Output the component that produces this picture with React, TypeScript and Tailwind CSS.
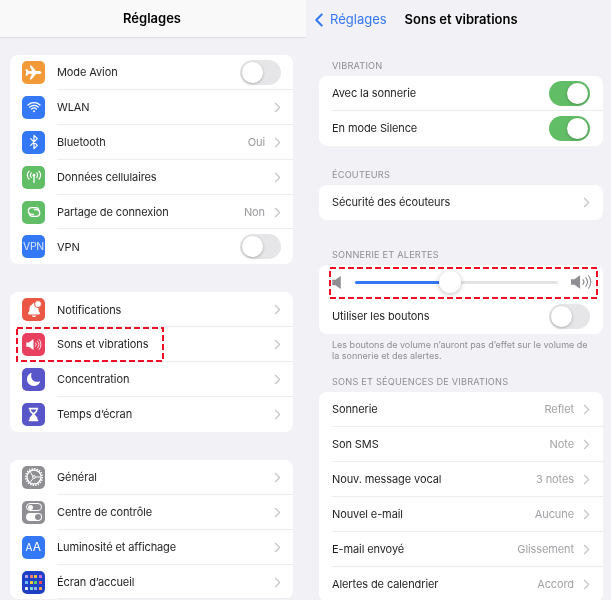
import { ChevronLeft, ChevronRight, Bluetooth } from 'lucide-react'
import { IoAirplane, IoWifi, IoMoon, IoNotifications } from 'react-icons/io5'

const font = { fontFamily: 'Inter, "Liberation Sans", sans-serif' }

const Toggle = ({ on = false }: { on?: boolean }) => (
  <div
    className={`flex h-[25px] w-[41px] items-center rounded-full p-[2px] ${
      on ? 'justify-end bg-[#62bd67]' : 'justify-start bg-[#e6e6e8]'
    }`}
  >
    <div className="h-[21px] w-[21px] rounded-full bg-white shadow-[0_1px_3px_rgba(0,0,0,0.25)]" />
  </div>
)

const Chevron = () => <ChevronRight size={17} strokeWidth={1.600} className="-mr-[5px] text-[#c4c4c8]" />

const Speaker = ({ className, waves = 0 }: { className?: string; waves?: number }) => (
  <svg viewBox="0 0 22 14" className={className} fill="none">
    <path d="M0 4.500h3L8 1v12L3 9.500H0z" fill="currentColor" />
    {waves > 0 && <path d="M10.500 5a3 3 0 0 1 0 4" stroke="currentColor" strokeWidth="1" strokeLinecap="round" />}
    {waves > 1 && <path d="M13 3.200a6 6 0 0 1 0 7.600" stroke="currentColor" strokeWidth="1" strokeLinecap="round" />}
    {waves > 2 && <path d="M15.500 1.500a9 9 0 0 1 0 11" stroke="currentColor" strokeWidth="1" strokeLinecap="round" />}
  </svg>
)

const Icon = ({ bg, children }: { bg: string; children: React.ReactNode }) => (
  <div className={`relative flex h-[23px] w-[23px] shrink-0 items-center justify-center rounded-[5px] text-white ${bg}`}>
    {children}
  </div>
)

const Antenna = () => (
  <svg viewBox="0 0 20 20" className="h-[18px] w-[18px]" fill="none" stroke="white" strokeWidth="1.300" strokeLinecap="round">
    <circle cx="10" cy="8" r="1.500" fill="white" stroke="none" />
    <path d="M10 9v7" strokeWidth="1.500" />
    <path d="M7 5.500a4 4 0 0 0 0 5M13 5.500a4 4 0 0 1 0 5M4.500 3.500a7 7 0 0 0 0 9M15.500 3.500a7 7 0 0 1 0 9" />
  </svg>
)

const Hotspot = () => (
  <svg viewBox="0 0 20 20" className="h-[18px] w-[18px]" fill="none" stroke="white" strokeWidth="1.500" strokeLinecap="round">
    <path d="M9.500 12.800H7.500a3.800 3.800 0 0 1 0-7.600h4.500a3.200 3.200 0 0 1 3.200 3.200" />
    <path d="M10.500 7.200h2a3.800 3.800 0 0 1 0 7.600H8a3.200 3.200 0 0 1-3.200-3.200" />
  </svg>
)

const SoundIcon = () => (
  <svg viewBox="0 0 20 20" className="h-[17px] w-[17px]" fill="none" stroke="white" strokeLinecap="round">
    <path d="M1.500 7.500h3L10 3.500v13l-5.500-4h-3z" fill="white" stroke="none" />
    <path d="M12.500 8a3 3 0 0 1 0 4M14.700 6a6 6 0 0 1 0 8M16.800 4.200a9 9 0 0 1 0 11.600" strokeWidth="1" />
  </svg>
)

const Hourglass = () => (
  <svg viewBox="0 0 20 20" className="h-[17px] w-[17px]" fill="white">
    <path d="M4.500 2h11v2h-1v2.500L11.200 10l3.300 3.500V16h1v2h-11v-2h1v-2.500L8.800 10 5.500 6.500V4h-1z" />
    <path d="M7.200 4h5.600v1.500L10 8.300 7.200 5.500z" fill="#5856c8" />
  </svg>
)

const Gear = () => (
  <svg viewBox="0 0 20 20" className="h-[20px] w-[20px]" fill="none" stroke="white">
    <circle cx="10" cy="10" r="7" strokeWidth="1.300" />
    <circle cx="10" cy="10" r="8.300" strokeWidth="1.600" strokeDasharray="1.300 1.300" />
    <circle cx="10" cy="10" r="1.400" strokeWidth="1" />
    <path d="M8.800 9.300 6.500 5.200M11.400 10H16M9.300 11.200 6.500 14.800" strokeWidth="1" />
  </svg>
)

const ControlCenter = () => (
  <div className="flex flex-col gap-[2px]">
    <div className="flex h-[8px] w-[16px] items-center justify-start rounded-full border border-white px-[1px]">
      <div className="h-[5px] w-[5px] rounded-full bg-white" />
    </div>
    <div className="flex h-[8px] w-[16px] items-center justify-end rounded-full bg-white px-[1px]">
      <div className="h-[6px] w-[6px] rounded-full bg-[#8e8e93]" />
    </div>
  </div>
)

const homeDots = [
  'bg-[#b9a3f0]', 'bg-[#f07a7a]', 'bg-[#f0c040]', 'bg-[#d070e0]',
  'bg-[#6fc0f5]', 'bg-[#f5c842]', 'bg-[#5ad06a]', 'bg-[#f05050]',
  'bg-[#e8e8f0]', 'bg-[#7fe0d0]', 'bg-[#8fb8f0]', 'bg-[#f0a050]',
]

const HomeScreen = () => (
  <div className="grid grid-cols-4 gap-x-[1.500px] gap-y-[3px]">
    {homeDots.map((c, i) => (
      <div key={i} className={`h-[3px] w-[3px] rounded-[0.500px] ${c}`} />
    ))}
  </div>
)

type RowProps = {
  icon?: React.ReactNode
  label: string
  value?: string
  toggle?: 'on' | 'off'
  last?: boolean
}

const LeftRow = ({ icon, label, value, toggle, last }: RowProps) => (
  <div className="flex h-[34.900px] items-center gap-[12px] pl-[12px]">
    {icon}
    <div className={`flex h-full flex-1 items-center justify-between pr-[12px] ${last ? '' : 'shadow-[inset_0_-1px_0_#ececee]'}`}>
      <span className="text-[11px] tracking-[-0.1px] text-[#1f1f21]">{label}</span>
      {toggle ? (
        <Toggle on={toggle === 'on'} />
      ) : (
        <div className="flex items-center gap-[4px]">
          {value && <span className="text-[11px] tracking-[-0.1px] text-[#9a9a9e]">{value}</span>}
          <Chevron />
        </div>
      )}
    </div>
  </div>
)

const RightRow = ({ label, value, toggle, last }: RowProps) => (
  <div className="pl-[13px]">
    <div className={`flex h-[35px] items-center justify-between pr-[13px] ${last ? '' : 'shadow-[inset_0_-1px_0_#ececee]'}`}>
      <span className="text-[11px] tracking-[-0.1px] text-[#1f1f21]">{label}</span>
      {toggle ? (
        <Toggle on={toggle === 'on'} />
      ) : (
        <div className="flex items-center gap-[4px]">
          {value && <span className="text-[11px] tracking-[-0.1px] text-[#a3a3a7]">{value}</span>}
          <Chevron />
        </div>
      )}
    </div>
  </div>
)

const SectionLabel = ({ children }: { children: React.ReactNode }) => (
  <div className="flex h-[11px] items-center pl-[13px] text-[9.200px] uppercase tracking-[0.2px] text-[#8e8e93]">
    {children}
  </div>
)

const Card = ({ children }: { children: React.ReactNode }) => (
  <div className="overflow-hidden rounded-[8px] bg-white">{children}</div>
)

const Annotation = ({ w, h, className }: { w: number; h: number; className: string }) => (
  <svg width={w} height={h} className={`pointer-events-none absolute ${className}`} fill="none">
    <rect x="1" y="1" width={w - 2} height={h - 2} stroke="#ee0f25" strokeWidth="2" strokeDasharray="6 3" />
  </svg>
)

export default function App() {
  return (
    <div className="relative flex h-[600px] w-[611px] overflow-hidden bg-[#f1f1f6] blur-[0.35px]" style={font}>
      <div className="flex w-[306px] shrink-0 flex-col">
        <div className="flex h-[38px] shrink-0 items-center justify-center border-b border-[#dedee2] bg-[#f9f9f9] pt-[1px] pr-[2px] text-[13px] font-semibold text-black">
          Réglages
        </div>
        <div className="flex flex-col gap-[28px] pl-[10px] pr-[13px] pt-[17px]">
          <Card>
            <LeftRow icon={<Icon bg="bg-[#f39a38]"><IoAirplane size={17} /></Icon>} label="Mode Avion" toggle="off" />
            <LeftRow icon={<Icon bg="bg-[#3478f6]"><IoWifi size={16} /></Icon>} label="WLAN" />
            <LeftRow icon={<Icon bg="bg-[#3478f6]"><Bluetooth size={16} strokeWidth={1.800} /></Icon>} label="Bluetooth" value="Oui" />
            <LeftRow icon={<Icon bg="bg-[#62bd67]"><Antenna /></Icon>} label="Données cellulaires" />
            <LeftRow icon={<Icon bg="bg-[#62bd67]"><Hotspot /></Icon>} label="Partage de connexion" value="Non" />
            <LeftRow icon={<Icon bg="bg-[#3478f6]"><span className="text-[10.500px] tracking-[-0.3px] text-[#dbe8ff]">VPN</span></Icon>} label="VPN" toggle="off" last />
          </Card>
          <Card>
            <LeftRow
              icon={
                <Icon bg="bg-[#ea5744]">
                  <IoNotifications size={16} />
                  <div className="absolute right-[3px] top-[2px] box-content h-[6px] w-[6px] rounded-full border border-[#ea5744] bg-white" />
                </Icon>
              }
              label="Notifications"
            />
            <LeftRow icon={<Icon bg="bg-[#e8405e]"><SoundIcon /></Icon>} label="Sons et vibrations" />
            <LeftRow icon={<Icon bg="bg-[#5856c8]"><IoMoon size={15} /></Icon>} label="Concentration" />
            <LeftRow icon={<Icon bg="bg-[#5856c8]"><Hourglass /></Icon>} label="Temps d’écran" last />
          </Card>
          <Card>
            <LeftRow icon={<Icon bg="bg-[#8e8e93]"><Gear /></Icon>} label="Général" />
            <LeftRow icon={<Icon bg="bg-[#8e8e93]"><ControlCenter /></Icon>} label="Centre de contrôle" />
            <LeftRow icon={<Icon bg="bg-[#3478f6]"><span className="text-[12px] tracking-[0.3px]"><span className="text-[10px]">A</span>A</span></Icon>} label="Luminosité et affichage" />
            <LeftRow icon={<Icon bg="bg-[#1f3fc4]"><HomeScreen /></Icon>} label="Écran d’accueil" />
          </Card>
        </div>
      </div>

      <div className="flex w-[305px] shrink-0 flex-col">
        <div className="flex h-[38px] shrink-0 items-center pt-[1px]">
          <ChevronLeft size={22} strokeWidth={2.200} className="ml-[2px] text-[#3478f6]" />
          <span className="text-[13px] text-[#3478f6]">Réglages</span>
          <span className="ml-[18px] text-[13px] font-semibold text-black">Sons et vibrations</span>
        </div>
        <div className="pl-[13px] pr-[8px] pt-[22px]">
          <SectionLabel>Vibration</SectionLabel>
          <div className="mt-[5px]">
            <Card>
              <RightRow label="Avec la sonnerie" toggle="on" />
              <RightRow label="En mode Silence" toggle="on" last />
            </Card>
          </div>
          <div className="mt-[23px]">
            <SectionLabel>Écouteurs</SectionLabel>
          </div>
          <div className="mt-[5px]">
            <Card>
              <RightRow label="Sécurité des écouteurs" last />
            </Card>
          </div>
          <div className="mt-[29px]">
            <SectionLabel>Sonnerie et alertes</SectionLabel>
          </div>
          <div className="mt-[5px]">
            <Card>
              <div className="flex h-[34px] items-center pl-[13px] pr-[13px] text-[#8e8e93]">
                <Speaker className="h-[15px] w-[24px] shrink-0" />
                <div className="relative -ml-[1px] flex h-[3px] flex-1 rounded-full bg-[#e3e3e6]">
                  <div className="h-full w-[85px] rounded-full bg-[#3478f6]" />
                  <div className="absolute left-[84px] top-[-10px] h-[22px] w-[22px] rounded-full bg-white shadow-[0_1px_5px_rgba(0,0,0,0.25)]" />
                </div>
                <Speaker className="-mr-[6px] ml-[13px] h-[16px] w-[25px] shrink-0" waves={3} />
              </div>
              <RightRow label="Utiliser les boutons" toggle="off" last />
            </Card>
          </div>
          <p className="mt-[6px] pl-[13px] pr-[8px] text-[9px] leading-[10.500px] text-[#8e8e93]">
            Les boutons de volume n’auront pas d’effet sur le volume de la sonnerie et des alertes.
          </p>
          <div className="mt-[15px]">
            <SectionLabel>Sons et séquences de vibrations</SectionLabel>
          </div>
          <div className="mt-[5px]">
            <Card>
              <RightRow label="Sonnerie" value="Reflet" />
              <RightRow label="Son SMS" value="Note" />
              <RightRow label="Nouv. message vocal" value="3 notes" />
              <RightRow label="Nouvel e-mail" value="Aucune" />
              <RightRow label="E-mail envoyé" value="Glissement" />
              <RightRow label="Alertes de calendrier" value="Accord" />
            </Card>
          </div>
        </div>
      </div>

      <Annotation w={148} h={35} className="left-[16px] top-[327px]" />
      <Annotation w={269} h={32} className="left-[329px] top-[267px]" />
    </div>
  )
}
